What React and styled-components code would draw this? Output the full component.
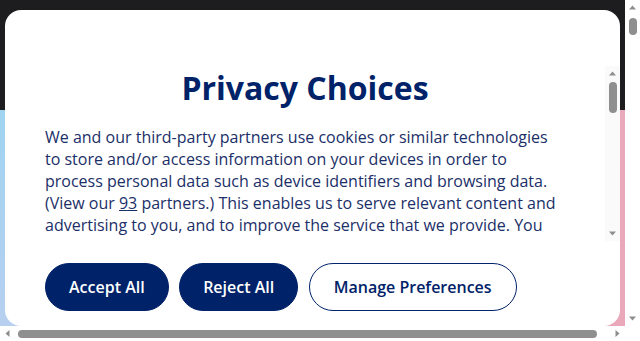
import React from 'react';
import styled, { createGlobalStyle } from 'styled-components';

const GlobalStyle = createGlobalStyle`
  html, body {
    margin: 0;
    padding: 0;
    overflow: hidden;
  }
  body {
    font-family: "Open Sans", "Noto Sans", sans-serif;
    background: #fff;
  }
`;

// Browser-like window: content area plus the two scroll bars
const Viewport = styled.div`
  width: 640px;
  height: 341px;
  display: grid;
  grid-template-columns: 625px 15px;
  grid-template-rows: 326px 15px;
  background: #fff;
`;

const Stage = styled.div`
  position: relative;
  overflow: hidden;
`;

// Page behind the dialog
const Page = styled.div`
  width: 650px;
  display: flex;
  flex-direction: column;
`;

const Header = styled.header`
  height: 110px;
  background: #1d1d1f;
`;

const Hero = styled.section`
  height: 230px;
  background: linear-gradient(125deg, #9fd4f1 0%, #c5cdef 30%, #dcb6d2 55%, #e9a9bb 78%, #eaa8ba 100%);
`;

// Scroll bars
const Bar = styled.div`
  display: flex;
  flex-direction: ${({ $horizontal }) => ($horizontal ? 'row' : 'column')};
  background: ${({ $bg }) => $bg || '#fff'};
  ${({ $horizontal }) => ($horizontal ? 'height: 15px;' : 'width: 15px;')}
`;

const Track = styled.div`
  flex: 1;
  display: flex;
  flex-direction: ${({ $horizontal }) => ($horizontal ? 'row' : 'column')};
  align-items: center;
`;

const Thumb = styled.div`
  background: #8f8f8f;
  border-radius: 4px;
  flex: none;
  ${({ $horizontal, $offset, $size }) =>
    $horizontal
      ? `height: 8px; width: ${$size}px; margin-left: ${$offset}px;`
      : `width: 8px; height: ${$size}px; margin-top: ${$offset}px;`}
`;

const ArrowBox = styled.svg`
  flex: none;
  display: block;
`;

const arrowPoints = {
  up: '4,9.5 11,9.5 7.5,5.5',
  down: '4,5.5 11,5.5 7.5,9.5',
  left: '9.5,4 9.5,11 5.5,7.5',
  right: '5.5,4 5.5,11 9.5,7.5',
};

const Arrow = ({ dir }) => (
  <ArrowBox width="15" height="15" viewBox="0 0 15 15">
    <polygon points={arrowPoints[dir]} fill="#8d8d8d" />
  </ArrowBox>
);

const ScrollBar = ({ horizontal, offset, size, bg }) => (
  <Bar $horizontal={horizontal} $bg={bg}>
    <Arrow dir={horizontal ? 'left' : 'up'} />
    <Track $horizontal={horizontal}>
      <Thumb $horizontal={horizontal} $offset={offset} $size={size} />
    </Track>
    <Arrow dir={horizontal ? 'right' : 'down'} />
  </Bar>
);

// Dialog
const Overlay = styled.div`
  position: absolute;
  inset: 0;
  display: flex;
  padding: 10px 5px 0 5px;
`;

const Dialog = styled.div`
  flex: 1;
  background: #fff;
  border-radius: 16px;
  padding-top: 56px;
  display: flex;
  flex-direction: column;
  overflow: hidden;
`;

const ScrollRow = styled.div`
  height: 175px;
  display: flex;
`;

const ScrollContent = styled.div`
  flex: 1;
  overflow: hidden;
  padding: 0 40px;
`;

const Title = styled.h2`
  margin: 0;
  font-size: 32px;
  line-height: 44px;
  font-weight: 700;
  color: #002269;
  text-align: center;
`;

const Body = styled.p`
  margin: 16px 0 0;
  font-size: 16px;
  line-height: 22px;
  color: #1b2f68;
`;

const Link = styled.a`
  color: inherit;
  text-decoration: underline;
`;

const Actions = styled.div`
  display: flex;
  gap: 10.5px;
  padding: 22px 40px 15px;
`;

const Button = styled.button`
  height: 48px;
  padding: 0 ${({ $outline }) => ($outline ? '24px' : '23px')};
  border-radius: 24px;
  font-family: inherit;
  font-size: 16px;
  font-weight: 600;
  cursor: pointer;
  border: 1px solid #002269;
  background: ${({ $outline }) => ($outline ? '#fff' : '#002269')};
  color: ${({ $outline }) => ($outline ? '#002269' : '#fff')};
`;

export default function App() {
  return (
    <>
      <GlobalStyle />
      <Viewport>
        <Stage>
          <Page>
            <Header />
            <Hero />
          </Page>
          <Overlay>
            <Dialog role="dialog" aria-label="Privacy Choices">
              <ScrollRow>
                <ScrollContent>
                  <Title>Privacy Choices</Title>
                  <Body>
                    We and our third-party partners use cookies or similar technologies
                    to store and/or access information on your devices in order to
                    process personal data such as device identifiers and browsing data.
                    (View our <Link href="#">93</Link> partners.) This enables us to
                    serve relevant content and advertising to you, and to improve the
                    service that we provide. You can review our Privacy Policy for more
                    information about how we collect and use your data, and how you can
                    exercise your rights.
                  </Body>
                  <Body>
                    By clicking "Accept All", you agree to the storing of cookies on your
                    device and the processing of your data for the purposes described.
                  </Body>
                </ScrollContent>
                <ScrollBar offset={1} size={31} bg="#fafafa" />
              </ScrollRow>
              <Actions>
                <Button>Accept All</Button>
                <Button>Reject All</Button>
                <Button $outline>Manage Preferences</Button>
              </Actions>
            </Dialog>
          </Overlay>
        </Stage>
        <ScrollBar offset={3} size={17} />
        <ScrollBar horizontal offset={3} size={579} />
        <div />
      </Viewport>
    </>
  );
}
